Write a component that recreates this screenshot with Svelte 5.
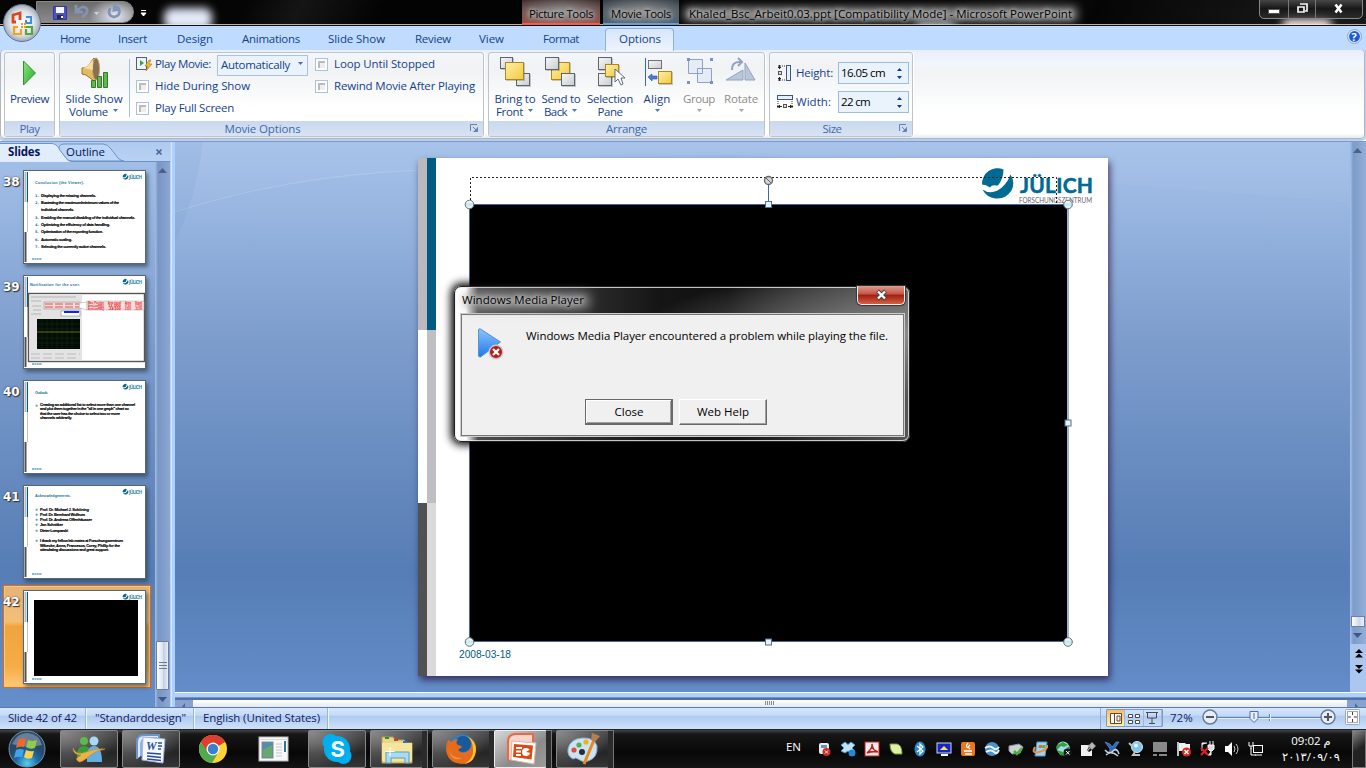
<script>
  function fit(node, width) {
    const run = () => {
      node.style.letterSpacing = '0px';
      const natural = node.getBoundingClientRect().width;
      const count = [...node.textContent.trim()].length;
      node.style.letterSpacing = (width - natural) / count + 'px';
    };
    run();
    document.fonts?.ready.then(run);
  }

  const menu = [
    ['Home', 60, 30], ['Insert', 118, 29], ['Design', 177, 36], ['Animations', 242, 58],
    ['Slide Show', 328, 57], ['Review', 415, 36], ['View', 479, 25], ['Format', 543, 36], ['Options', 619, 42]
  ];
  const slides = [38, 39, 40, 41, 42];
  const s38 = [
    ['1.', 'Displaying the missing channels.', 26, 55], ['2.', 'Illustrating the maximum/minimum values of the', 33, 78],
    ['', 'individual channels.', 40, 33], ['3.', 'Enabling the manual disabling of the individual channels.', 48, 94],
    ['4.', 'Optimizing the efficiency of data handling.', 55, 69], ['5.', 'Optimisation of the exporting function.', 62, 62],
    ['6.', 'Automatic scaling.', 70, 31], ['7.', 'Selecting the currently active channels.', 77, 65]
  ];
  const s40 = [
    ['Creating an additional list to select more than one channel', 25, 95], ['and plot them together in the "all in one graph" chart so', 29.3, 89],
    ['that the user has the choice to select two or more', 33.6, 80], ['channels arbitrarily.', 38, 32]
  ];
  const s41 = [
    ['Prof. Dr. Michael J. Schöning', 25, 49, 1], ['Prof. Dr. Bernhard Wolfrum', 30, 45, 1], ['Prof. Dr. Andreas Offenhäusser', 35, 52, 1],
    ['Jan Schnitker', 40, 23, 1], ['Dieter Lomparski', 46, 28, 1], ['I thank my fellow lab mates at Forschungszentrum', 56, 83, 1],
    ['Wibecke, Anna, Francesca, Corey, Phillip for the', 61, 80, 0], ['stimulating discussions and great support.', 65.3, 69, 0]
  ];
  const handles = [[51.5, 46.5, 1], [650, 46.5, 1], [51.5, 484, 1], [650, 484, 1], [350.5, 46.5, 0], [650, 265, 0], [350.5, 484, 0]];
  const tasks = [
    ['msn', 60, 58, 0], ['word', 122, 58, 0], ['chrome', 184, 58, 2], ['window', 245, 58, 2], ['skype', 308, 58, 0],
    ['folder', 370, 53, 1], ['firefox', 432, 58, 1], ['ppt', 494, 53, 3], ['paint', 556, 53, 1]
  ];
  const tray = ['card', 'dropbox', 'acrobat', 'leaf', 'bt', 'screen', 'java', 'bird', 'sync', 'win', 'globe', 'pin', 'idm', 'xray', 'net', 'flag', 'plug', 'vol', 'lan'];
</script>

{#snippet caret(c)}<svg class="caret" width="7" height="4"><path d="M1 0h5L3.500 3z" fill={c} /></svg>{/snippet}

{#snippet square(x, y, w, kind)}
  <rect x={x + 1} y={y + 1} width={w} height={w - 1} fill="#0003" />
  <rect x={x + 0.5} y={y + 0.5} width={w - 1} height={w - 2} fill={kind ? 'url(#gold)' : 'url(#steel)'} stroke={kind ? '#a98722' : '#5b6470'} />
{/snippet}

{#snippet globeMark(x, y, r)}
  <g transform={`translate(${x} ${y}) scale(${r / 15})`}>
    <path d="M6-14A15.500 15.500 0 0 0-15.500 1q4 0 8 3 2-3 6-2l2 0Q6-5 6-14Z" fill="#006a92" />
    <path d="M13-9q5 8 1 16-6 9-16 8-9-1-13-9 7 5 15 1Q9 2 13-9Z" fill="#006a92" />
  </g>
{/snippet}

{#snippet launcher()}<svg class="launch" width="9" height="9"><path d="M.5 7V.5H7M3.500 7.500h4v-4M3 3l4 4" fill="none" stroke="#6583ad" /><path d="M4 7h4V3z" fill="#6583ad" /></svg>{/snippet}

{#snippet thumb(n)}
  <svg class="thumb" width="123" height="94" viewBox="0 0 123 94">
    <rect x=".5" y=".5" width="122" height="93" fill="#fff" stroke="#5b6674" />
    <path d="M2.500 2v30" stroke="#b9b9be" stroke-width="2" /><path d="M4.500 2v30" stroke="#00607f" stroke-width="1" />
    <path d="M4.500 32v30" stroke="#c2c2c6" /><path d="M2.500 62v30" stroke="#515151" stroke-width="2" />
    {@render globeMark(102.500, 6.700, 2.800)}
    <text x="106" y="8.600" font-size="5" font-weight="700" fill="#2b89a8" textLength="13">JÜLICH</text>
    <path d="M9 89h10" stroke="#17749a" stroke-dasharray="2 .4" />
    {#if n === 38}
      <text class="th" x="12" y="14" textLength="49">Conclusion (the Viewer).</text>
      {#each s38 as [k, t, y, w]}
        {#if k}<text class="tn" x="12" {y} dy="1">{k}</text>{/if}
        <text class="tt" x="18" y={y + 1} textLength={w}>{t}</text>
      {/each}
    {:else if n === 39}
      <text class="th" x="7" y="11" textLength="50">Notification for the user.</text>
      <rect x="5.500" y="18.500" width="116" height="68" fill="#fff" stroke="#555" stroke-width="1.400" />
      <rect x="7" y="19" width="52" height="66" fill="#e3e3e3" />
      <path d="M8 22h45M8 26h10M9 31h9M10 35h8M8 39h10" stroke="#aaa" stroke-width=".8" />
      <rect x="14" y="44" width="43" height="30" fill="#040c06" />
      <path d="M19 44v30M24 44v30M29 44v30M34 44v30M39 44v30M44 44v30M49 44v30M14 49h43M14 54h43M14 63h43M14 68h43" stroke="#123a18" stroke-width=".4" />
      <path d="M14 57h43" stroke="#808500" stroke-width=".8" />
      <rect x="38" y="36" width="19" height="5" fill="#fff" stroke="#555" stroke-width=".4" /><rect x="41" y="36" width="15" height="2" fill="#1225e8" />
      <rect x="21" y="27" width="36" height="7" fill="#f1dada" stroke="#888" stroke-width=".5" />
      <path d="M22 29h34M22 32h34" stroke="#dd5555" stroke-dasharray="8 2" />
      <path d="M57 28l7-1v8l-7-2" fill="#fff" stroke="#888" stroke-width=".4" />
      <rect x="64" y="26" width="57" height="9" fill="#f8dede" stroke="#aaa" stroke-width=".5" />
      {#each [['Max. Positive', 'Area signal', 'Area', 'Signal'], ['Area LowFREQ', '12.500', '07.500', '17.500'], ['Area LowFREQ', '-24.500', '2.500', '-22.500']] as line, i}
        <text class="red" x="65" y={28.7 + i * 2.9} textLength="16" lengthAdjust="spacingAndGlyphs">{line[0]}</text>
        <text class="red" x="85" y={28.7 + i * 2.9} textLength="13" lengthAdjust="spacingAndGlyphs">{line[1]}</text>
        <text class="red" x="102" y={28.7 + i * 2.9} textLength="6" lengthAdjust="spacingAndGlyphs">{line[2]}</text>
        <text class="red" x="112" y={28.7 + i * 2.9} textLength="7" lengthAdjust="spacingAndGlyphs">{line[3]}</text>
      {/each}
      <path d="M8 79h49M8 83h48" stroke="#aaa" stroke-width=".7" stroke-dasharray="9 3" />
    {:else if n === 40}
      <text class="th" x="12" y="14" textLength="13">Outlook.</text>
      <text class="tn" x="12" y="27">❖</text>
      {#each s40 as [t, y, w]}<text class="tt" x="17" y={y + 1} textLength={w}>{t}</text>{/each}
    {:else if n === 41}
      <text class="th" x="12" y="12" textLength="36">Acknowledgements.</text>
      {#each s41 as [t, y, w, b]}
        {#if b}<text class="tn" x="12" y={y + 1}>❖</text>{/if}
        <text class="tt" x="17" y={y + 1} textLength={w}>{t}</text>
      {/each}
    {:else}
      <rect x="11" y="10" width="104" height="76" fill="#000" />
    {/if}
  </svg>
{/snippet}

{#snippet app(k)}
  <svg width="36" height="34" viewBox="0 0 36 34">
    {#if k === 'msn'}
      <circle cx="13" cy="9" r="4" fill="#5fb94a" /><path d="M6 27q-1-13 7-13t7 13z" fill="#3d9a35" />
      <circle cx="23" cy="9" r="4.500" fill="#a9d8f5" /><path d="M16 30q-1-16 7-16t8 16z" fill="#66aee2" />
      <path d="M2 16q3 8 13 4t19-3q-9 1-17 8t-10 4q-4-2 3-6-8 0-8-7z" fill="#eab34c" stroke="#c58a2a" stroke-width=".6" />
    {:else if k === 'word'}
      <path d="M4 27V10q0-7 7-7h15v5" fill="#dce9fb" stroke="#6b93cf" stroke-width="2" /><path d="M8 24V12q1-6 7-6h9" fill="none" stroke="#8fb1e2" stroke-width="2" />
      <path d="M10 5l22 2-2 24-21-3z" fill="#f4f8ff" stroke="#9db3d8" /><text x="13" y="18" font-size="12" font-weight="700" font-style="italic" font-family="Liberation Serif, serif" fill="#2d4f9c">W</text>
      <path d="M14 21l14 1M14 24l14 1.500M14 27l14 1.500M25 11h4M25 14h4M25 17h3" stroke="#2a4b96" stroke-width="1.700" />
    {:else if k === 'chrome'}
      <circle cx="18" cy="17" r="14" fill="#fdd335" /><path d="M18 17L5.900 10A14 14 0 0 1 30.100 10z" fill="#e0392c" /><path d="M18 10h12.200A14 14 0 0 0 5.900 10l6 10z" fill="#df3e2f" />
      <path d="M5.900 10A14 14 0 0 0 17 31l6-10-5 2-6-4z" fill="#4fab4b" /><circle cx="18" cy="17" r="6.500" fill="#fff" /><circle cx="18" cy="17" r="5.200" fill="#3a80cc" />
    {:else if k === 'window'}
      <rect x="3" y="5" width="29" height="24" fill="#f8f8f8" stroke="#b6b9bc" /><path d="M3 7.500h29" stroke="#d7dadd" /><rect x="6" y="10" width="11" height="16" fill="#508fae" stroke="#888" /><path d="M7 18l9-5v12H7z" fill="#69a86d" />
      <path d="M20 12h6M20 15h6M20 18h6M20 21h6M20 24h6" stroke="#c5c5c5" /><rect x="28" y="9" width="2" height="11" fill="#397496" />
    {:else if k === 'skype'}
      <circle cx="18" cy="17" r="13" fill="#00aff0" /><circle cx="11.500" cy="10" r="8" fill="#00aff0" /><circle cx="24.500" cy="24" r="8" fill="#00aff0" /><text x="11.500" y="25" font-size="22" font-weight="700" fill="#fff" font-family="Inter, sans-serif">S</text>
    {:else if k === 'folder'}
      <path d="M3 5h11l2 3h9l2 3h6v20H3z" fill="#ead58d" stroke="#b89b4d" /><path d="M3 11h30v18H3z" fill="#f5e59d" /><path d="M6 5h4v2H6z" fill="#1c9b2c" /><path d="M15 7h4v2h-4z" fill="#d43b24" /><path d="M24 9h4v2h-4z" fill="#1b7ac9" />
      <path d="M7 31V20h23v11h-4v-5H12v5z" fill="#a9dcf4" stroke="#5a9dc5" /><path d="M11 15v9M6.500 19.500h9" stroke="#fff" />
    {:else if k === 'firefox'}
      <circle cx="19" cy="16" r="13.500" fill="#2f7fc9" /><circle cx="20" cy="12" r="8" fill="#185a9c" /><path d="M5 8q2 0 3 2 3-3 7-3-3 4 0 6 4 1 4 2l-4 3q4 5 10 1 7-5 1-14 8 5 7 13-1 14-14 14Q4 31 3 17q0-5 2-9z" fill="#e66b1d" />
      <path d="M24 4q9 5 9 14-1 12-12 14 10-5 9-15 0-8-6-13z" fill="#fcc430" /><path d="M5 17q4 10 14 9-9 5-14-9z" fill="#f9982f" />
    {:else if k === 'ppt'}
      <path d="M5 29V10q0-8 8-8h17v8" fill="#f8d5ca" stroke="#ea6a42" stroke-width="2" /><path d="M9 9l24 2-2 21-23-4z" fill="#fff" stroke="#ddb3a7" /><path d="M11 12l19 1.500-1.500 14L10 25z" fill="#db4a12" />
      <circle cx="23" cy="20" r="4" fill="#fff" /><path d="M23 20l5-3v4z" fill="#db4a12" /><path d="M13 16h6M13 19.500h5M13 23h5" stroke="#fff" stroke-width="2" />
    {:else}
      <path d="M17 6q12-1 15 8 1 12-9 15-5 2-10-2-2-2-5 0-6-3-5-10Q5 7 17 6z" fill="#cbe3f2" stroke="#88adc8" /><circle cx="17" cy="20" r="3" fill="#222e38" />
      <circle cx="9" cy="18" r="2.600" fill="#e04c37" /><circle cx="14" cy="13" r="2.600" fill="#55ad50" /><circle cx="21" cy="10" r="2.600" fill="#f2b11b" /><path d="M19 32l10-24" stroke="#e68b20" stroke-width="3" /><path d="M26 8l1-7 8 3-5 6z" fill="#b28052" />
    {/if}
  </svg>
{/snippet}

{#snippet trayIcon(k)}
  <svg width="16" height="16" viewBox="0 0 16 16">
    {#if k === 'card'}<rect x="3" y="2" width="10" height="11" rx="2" fill="#e8edf2" /><path d="M5 4h6v3H5z" fill="#6f8faa" /><circle cx="10.500" cy="11" r="4" fill="#d02824" /><path d="M9 9.500l3 3m0-3l-3 3" stroke="#fff" />
    {:else if k === 'dropbox'}<path d="M1 4l4-3 3 2.500L11 1l4 3-3 3 3 3-4 2-3-2-3 2-4-2 3-3z" fill="#bfe2f8" stroke="#4299d5" /><circle cx="12" cy="12" r="3.500" fill="#2389d2" />
    {:else if k === 'acrobat'}<rect x="1" y="1" width="14" height="14" fill="#f4eded" stroke="#c51e20" /><path d="M3 12Q9 7 8 3q0 6 6 8-5-1-11 1z" fill="none" stroke="#c51e20" stroke-width="1.600" />
    {:else if k === 'leaf'}<path d="M2 3h7q5 1 5 10H7Q2 11 2 3z" fill="#dff0a9" stroke="#78a32b" />
    {:else if k === 'bt'}<ellipse cx="8" cy="8" rx="5.500" ry="7.500" fill="#2587d4" /><path d="M5 5l6 5-3 3V3l3 3-6 5" fill="none" stroke="#fff" stroke-width="1.200" />
    {:else if k === 'screen'}<rect x="1" y="2" width="14" height="10" fill="#1525c8" stroke="#cfd6ef" /><path d="M4 9l4-4 4 4" fill="#ffe34d" /><path d="M5 14h7" stroke="#fff" stroke-width="2" />
    {:else if k === 'java'}<rect x="1" y="1" width="14" height="14" rx="2" fill="#e87820" /><path d="M8 2q-3 3 0 5M10 4q-3 2 0 4M4 10h8M5 13h7" stroke="#fff" fill="none" stroke-width="1.300" />
    {:else if k === 'bird'}<circle cx="8" cy="8" r="7" fill="#4c91c9" /><path d="M1 7q5-3 8 0t6-1M2 11q5-3 8 0t5-2" stroke="#e8f6ff" fill="none" stroke-width="2" />
    {:else if k === 'sync'}<path d="M1 5l10-2 4 3-3 6-8 1-3-3z" fill="#cad0d4" stroke="#8a9298" /><path d="M6 10l3 3 5-6" stroke="#41b332" stroke-width="2.500" fill="none" />
    {:else if k === 'globe'}<circle cx="7" cy="7" r="6.500" fill="#a5dbe8" /><path d="M1 4l6-3 5 3-4 2-3-1-4 4zM1 9l3 5 5 1-2-4-3-1zM10 7l4-2v4z" fill="#31a437" /><circle cx="11.500" cy="11.500" r="4" fill="#16191a" /><path d="M10 10l3.500 3.500m0-3.500L10 13.500" stroke="#fff" />
    {:else if k === 'win'}<path d="M5 1h10l-2 14H3z" fill="#9bd4f7" stroke="#4d9ac9" /><path d="M7 4h3v3H6.500z" fill="#df6a29" /><path d="M10.500 4h3L13 7h-3z" fill="#68aa3b" /><path d="M3 6q-4 7 4 5t9-7" fill="none" stroke="#e7943a" stroke-width="2" />
    {:else if k === 'pin'}<path d="M1 4h9l-3 5 2 2 3-2v6H1z" fill="#f1f1f1" /><path d="M7 10l3-3M8 4l4 4M9 5l3-3 3 3-3 3z" stroke="#aaa" fill="#bbb" stroke-width="1.300" />
    {:else if k === 'idm'}<path d="M1 1l5 2 2 3 4-5h3l-4 6 2 3-4-1-4 3 1-4z" fill="#2867be" stroke="#8ab4e6" stroke-width=".5" /><path d="M1 9q4 5 8 1t6 3M2 14q5-5 12 1" stroke="#c6d5e2" fill="none" stroke-width="1.500" />
    {:else if k === 'xray'}<circle cx="9" cy="6" r="5.500" fill="#7fc5ef" stroke="#d9e7ed" /><circle cx="8" cy="4.500" r="2" fill="#e8f8ff" /><path d="M1 2l3 3M7 11l-2 3h7" stroke="#bac3ca" stroke-width="2" fill="none" />
    {:else if k === 'net'}<rect x="1" y="1" width="14" height="10" fill="#8a8a8a" /><path d="M1 13h4v2H1zM7 13h8v2H7z" fill="#888" />
    {:else if k === 'flag'}<path d="M2 1v14" stroke="#fff" stroke-width="1.500" /><path d="M3 2h6l1 1h4v7H3z" fill="#f0f0f0" /><circle cx="10.500" cy="11" r="4.500" fill="#d52b23" /><path d="M8.500 9l4 4m0-4l-4 4" stroke="#fff" stroke-width="1.400" />
    {:else if k === 'plug'}<path d="M8 4h6v4l-2 2h-2L8 8zM10 0v4M13 0v4M11 10v4H8M2 4V2h5M2 4v6" fill="#ddd" stroke="#fff" /><path d="M1 7l7 7M8 7l-7 7" stroke="#e02020" stroke-width="2.200" />
    {:else if k === 'vol'}<path d="M1 5h3l4-4v14l-4-4H1z" fill="#fff" /><path d="M10 5q2 3 0 6M12 3q4 5 0 10" stroke="#ccc" fill="none" />
    {:else}<rect x="5.500" y="4.500" width="9" height="7" fill="#111" stroke="#fff" /><path d="M7 14h7M3 7v7h5M1 1v4h4V1M3 5v3" fill="none" stroke="#fff" />
    {/if}
  </svg>
{/snippet}

<svg class="defs" width="0" height="0"><defs>
  <linearGradient id="gold" x1="0" y1="0" x2="1" y2="1"><stop offset="0" stop-color="#fff0a4" /><stop offset="1" stop-color="#f2c940" /></linearGradient>
  <linearGradient id="steel" x1="0" y1="0" x2="1" y2="1"><stop offset="0" stop-color="#f7f7f7" /><stop offset="1" stop-color="#c9cdd1" /></linearGradient>
  <linearGradient id="blueTri" x1="0" y1="0" x2="0" y2="1"><stop offset="0" stop-color="#8cc4fb" /><stop offset="1" stop-color="#1f78ec" /></linearGradient>
  <linearGradient id="green" x1="0" y1="0" x2="1" y2="1"><stop offset="0" stop-color="#8be87a" /><stop offset="1" stop-color="#1faa2d" /></linearGradient>
  <radialGradient id="orb" cx=".5" cy=".9"><stop offset="0" stop-color="#54d0f4" /><stop offset=".6" stop-color="#1c6da8" /><stop offset="1" stop-color="#27496a" /></radialGradient>
  <radialGradient id="pearl"><stop offset="0" stop-color="#fff" /><stop offset=".65" stop-color="#dfe3e9" /><stop offset="1" stop-color="#9da9b8" /></radialGradient>
  <linearGradient id="hnd" x1="0" y1="0" x2="0" y2="1"><stop offset="0" stop-color="#fff" /><stop offset=".5" stop-color="#c8e6ea" /><stop offset="1" stop-color="#eafafa" /></linearGradient>
</defs></svg>

<div class="screen">
  <header class="title">
    <div class="blob b1"></div><div class="blob b3"></div><div class="blob b4"></div>
    <div class="quick">
      <svg width="100" height="22" viewBox="0 0 100 22">
        <path d="M6.500 5.500h13v13h-13z" fill="#4e52c0" stroke="#34389c" /><path d="M9 6h8v6H9z" fill="#f3f5ff" /><path d="M10 14h6v4h-6z" fill="#222a55" /><path d="M14 15h2v2h-2z" fill="#fff" />
        <path d="M29 4v7h7M30 10q6-7 10-2 1 5-5 8" fill="none" stroke="#8492b6" stroke-width="2.800" /><path d="M47 11h5l-2.500 3z" fill="#d0d3dc" />
        <path d="M63 7q-3 8 4 9 7-1 5-8-1-2-4-3M68 3l-1 6 6-1" fill="none" stroke="#8494b8" stroke-width="2.800" />
      </svg>
    </div>
    <svg class="more" width="7" height="7"><path d="M1 .5h5M1 3h5L3.500 6z" stroke="#fff" fill="#fff" /></svg>
    <div class="context pic"><span use:fit={64}>Picture Tools</span></div>
    <div class="context mov"><span use:fit={60}>Movie Tools</span></div>
    <div class="doc"><span use:fit={383}>Khaled_Bsc_Arbeit0.03.ppt [Compatibility Mode] - Microsoft PowerPoint</span></div>
    <div class="winbtns">
      <i><svg width="12" height="12"><rect x=".5" y="6.500" width="11" height="4" fill="#fff" stroke="#555" /></svg></i>
      <i><svg width="13" height="12"><path d="M4 1h7v7H9M2 4h6v5H2z" fill="none" stroke="#f4f4f4" stroke-width="1.700" /></svg></i>
      <i class="x"><svg width="12" height="12"><path d="M2.500 1.500l6 8M8.500 1.500l-6 8" stroke="#fff" stroke-width="2.600" /></svg></i>
    </div>
  </header>

  <nav class="tabs">
    {#each menu as [t, x, w], i}
      <div class="tab" class:on={t === 'Options'} style:margin-left={(i ? x - menu[i - 1][1] - menu[i - 1][2] : x) - (t === 'Options' ? 14 : 0) + 'px'}><span use:fit={w}>{t}</span></div>
    {/each}
    <svg class="help" width="15" height="15"><circle cx="7.500" cy="7.500" r="7" fill="#d9e8fa" stroke="#8ca6c8" /><circle cx="7.500" cy="7.500" r="5.400" fill="#1c5bd0" /><text x="4.600" y="11.500" font-size="11" font-weight="700" fill="#fff">?</text></svg>
  </nav>

  <div class="office">
    <svg width="42" height="42" viewBox="0 0 42 42"><circle cx="21" cy="21" r="18.500" fill="url(#pearl)" stroke="#667487" />
      <g fill="none" stroke-width="2.800"><path d="M19 18v-7l-7 2v7h3" stroke="#d9471c" /><path d="M25 15h5v6h-5v-3" stroke="#3c90d8" stroke-width="2" /><path d="M17 25h-4v7h7v-5" stroke="#f0a51d" stroke-width="2.200" /><path d="M25 27v5h6v-7h-6" stroke="#54a73b" stroke-width="2.200" /></g>
      <path d="M20 21h2v2h-2zM23 21h2v2h-2zM20 24h2v2h-2zM23 24h2v2h-2z" fill="#e89a25" /></svg>
  </div>

  <section class="ribbon">
    <div class="group g1">
      <div class="body col">
        <svg width="30" height="36"><path d="M8.500 8v24l12-12z" fill="url(#green)" stroke="#37903a" /></svg>
        <span class="lb" use:fit={39}>Preview</span>
      </div>
      <div class="cap"><span use:fit={20}>Play</span></div>
    </div>
    <div class="group g2">
      <div class="body">
        <div class="big" style:width="66px">
          <svg width="34" height="36"><path d="M5 15l5-1 7-9q7 5 3 21l-3 2-8-6-4-1z" fill="#e4ba62" stroke="#9a7228" /><ellipse cx="19" cy="16" rx="3.500" ry="11" fill="#847155" stroke="#c5a35e" /><path d="M6 15l10-8v10z" fill="#ffeebb" opacity=".7" />
            <g fill="#60b74b" stroke="#317d2a"><path d="M14.500 27.500h4v7h-4zM20.500 23.500h4v11h-4zM26.500 19.500h4v15h-4z" /></g></svg>
          <span class="lb" use:fit={57}>Slide Show</span><span class="lb"><span use:fit={39}>Volume</span>{@render caret('#4a78b8')}</span>
        </div>
        <div class="sep"></div>
        <div class="opts">
          <div class="row r1"><svg width="17" height="16"><rect x=".5" y="1.500" width="10" height="12" fill="#eef3f8" stroke="#55606f" /><path d="M4 4v6l4-3z" fill="#3ba43e" /><path d="M13 4l-4 6h3l-2 5 6-7h-3l2-4z" fill="#f2bd36" stroke="#a77920" stroke-width=".6" /></svg>
            <span class="pm" use:fit={56}>Play Movie:</span><div class="combo"><span use:fit={69}>Automatically</span>{@render caret('#4a6ea5')}</div></div>
          <div class="row"><i class="chk"></i><span use:fit={95}>Hide During Show</span></div>
          <div class="row"><i class="chk"></i><span use:fit={79}>Play Full Screen</span></div>
        </div>
        <div class="opts o2">
          <div class="row"><i class="chk"></i><span use:fit={101}>Loop Until Stopped</span></div>
          <div class="row"><i class="chk"></i><span use:fit={141}>Rewind Movie After Playing</span></div>
        </div>
      </div>
      <div class="cap mo"><span use:fit={76}>Movie Options</span>{@render launcher()}</div>
    </div>
    <div class="group g3">
      <div class="body">
        <div class="big" style:width="46px"><svg width="34" height="36">{@render square(2, 4, 13, 0)}{@render square(18, 20, 14, 0)}{@render square(7, 9, 19, 1)}</svg>
          <span class="lb" use:fit={41}>Bring to</span><span class="lb"><span use:fit={27}>Front</span>{@render caret('#4a78b8')}</span></div>
        <div class="big" style:width="46px"><svg width="34" height="36">{@render square(7, 9, 19, 1)}{@render square(1, 4, 14, 0)}{@render square(17, 20, 14, 0)}</svg>
          <span class="lb" use:fit={39}>Send to</span><span class="lb"><span use:fit={23}>Back</span>{@render caret('#4a78b8')}</span></div>
        <div class="big" style:width="52px"><svg width="34" height="36">{@render square(5, 4, 14, 0)}{@render square(5, 20, 14, 0)}{@render square(12, 11, 14, 1)}<path d="M22 16v13l3-3 3 6 2-1-2-6h4z" fill="#fff" stroke="#5e6c82" /></svg>
          <span class="lb" use:fit={46}>Selection</span><span class="lb" use:fit={25}>Pane</span></div>
        <div class="big" style:width="42px"><svg width="34" height="36"><path d="M5.500 5v28" stroke="#3267bd" /><rect x="8.500" y="7.500" width="13" height="8" fill="url(#steel)" stroke="#6c737d" />{@render square(18, 18, 14, 1)}<path d="M8 24l4-3v2h5v3h-5v2z" fill="#4a7bd0" stroke="#2456a7" stroke-width=".6" /></svg>
          <span class="lb" use:fit={27}>Align</span><span class="lb dn">{@render caret('#4a78b8')}</span></div>
        <div class="big off" style:width="42px"><svg width="34" height="36"><path d="M6.500 6.500h14v14h-14zM15.500 15.500h14v14h-14z" fill="#e5ecf6" stroke="#8fa1c1" /><path d="M5 5h3v3H5zM28 5h3v3h-3zM5 28h3v3H5zM28 28h3v3h-3z" fill="#7d92b9" /></svg>
          <span class="lb" use:fit={32}>Group</span><span class="lb dn">{@render caret('#a5a5a5')}</span></div>
        <div class="big off" style:width="42px"><svg width="34" height="36"><path d="M2 27h17V17zM21 10v17h10z" fill="#bac7da" stroke="#92a3be" /><path d="M8 17q0-9 9-8m-3-4l4 4-4 4" fill="none" stroke="#8fa3c3" stroke-width="2" /></svg>
          <span class="lb" use:fit={34}>Rotate</span><span class="lb dn">{@render caret('#a5a5a5')}</span></div>
      </div>
      <div class="cap"><span use:fit={41}>Arrange</span></div>
    </div>
    <div class="group g4">
      <div class="body sizes">
        <div class="srow"><svg width="16" height="16"><path d="M1 1h10M1 15h10" stroke="#333" stroke-dasharray="1 1" /><path d="M2.500 0v4M2.500 12v4M1 2.500h3M1 13.500h3" stroke="#222" /><rect x="1.500" y="6.500" width="3" height="3" fill="#ddd" stroke="#555" /><rect x="9.500" y=".5" width="4" height="15" fill="#e5efff" stroke="#3f5579" /></svg><label use:fit={37}>Height:</label><div class="num"><span use:fit={44}>16.05 cm</span><svg width="7" height="13"><path d="M1 4h5L3.500 1zM1 9h5l-2.500 3z" fill="#103a8c" /></svg></div></div>
        <div class="srow"><svg width="16" height="16"><rect x=".5" y="1.500" width="15" height="4" fill="#e5efff" stroke="#3f5579" /><path d="M1 7v8M15 7v8" stroke="#333" stroke-dasharray="1 1" /><path d="M0 12.500h5M11 12.500h5M2.500 11v3M13.500 11v3" stroke="#222" /><rect x="6.500" y="10.500" width="3" height="3" fill="#ddd" stroke="#555" /></svg><label use:fit={35}>Width:</label><div class="num"><span use:fit={29}>22 cm</span><svg width="7" height="13"><path d="M1 4h5L3.500 1zM1 9h5l-2.500 3z" fill="#103a8c" /></svg></div></div>
      </div>
      <div class="cap sz"><span use:fit={19}>Size</span>{@render launcher()}</div>
    </div>
  </section>

  <main>
    <aside>
      <div class="ptabs">
        <svg width="170" height="20"><path d="M0 20V1.500h52q4 0 7 5l7 10q3 3 6 3H170" fill="none" stroke="#6d93c5" /><path d="M0 20V2h51q5 0 8 5l8 11q2 2 4 2z" fill="#e1edfc" /><path d="M59 7q0-5 5-5h39q5 0 8 5l7 9q3 3 6 3H72q-4 0-6-3z" fill="#bdd5f6" stroke="#6d93c5" /><path d="M156.500 7.500l5 5M161.500 7.500l-5 5" stroke="#48699b" stroke-width="1.700" /></svg>
        <b use:fit={32}>Slides</b><span use:fit={39}>Outline</span>
      </div>
      <div class="panel">
        <div class="list">
          {#each slides as n}
            <div class="item" class:sel={n === 42}><b use:fit={15}>{n}</b>{@render thumb(n)}</div>
          {/each}
        </div>
        <div class="sbar"><svg width="10" height="6"><path d="M0 5h9L4.500 0z" fill="#4b6186" /></svg><i></i><div class="grip"></div><svg width="10" height="6"><path d="M0 0h9L4.500 5z" fill="#3d5886" /></svg></div>
      </div>
    </aside>
    <div class="split"></div>
    <div class="stage">
      <div class="upper">
        <div class="canvas">
          <svg class="swoosh" width="1174" height="551"><path d="M0 70Q120 20 560 12L1174 60V0H0z" fill="#fff" opacity=".04" /><path d="M0 70Q110 34 245 28" fill="none" stroke="#fff" opacity=".17" /><path d="M0 0h28Q20 60 0 100z" fill="#4575b8" opacity=".07" /></svg>
          <svg class="slide" width="690" height="518" viewBox="0 0 690 518">
            <rect width="690" height="518" fill="#fff" />
            <path d="M0 0h9v172H0z" fill="#b9b9be" /><path d="M9 0h9v172H9z" fill="#005b82" /><path d="M9 172h9v173H9z" fill="#bebec3" /><path d="M0 345h9v173H0z" fill="#515151" /><path d="M9 345h9v173H9z" fill="#dadada" />
            {@render globeMark(579.500, 25.500, 15)}
            <text x="602" y="34.500" font-family="Lato, sans-serif" font-weight="700" font-size="21" stroke="#006a92" stroke-width=".5" fill="#006a92" textLength="73">JÜLICH</text>
            <text x="601" y="45" font-family="Lato, sans-serif" font-size="7.200" fill="#666" textLength="73" lengthAdjust="spacingAndGlyphs">FORSCHUNGSZENTRUM</text>
            <path d="M52.500 46V19.500h586V46" fill="none" stroke="#222" stroke-dasharray="2 2" />
            <rect x="52" y="47" width="597" height="436" fill="#000" />
            <path d="M51.500 46.500h598.500v437h-598.500z" fill="none" stroke="#40699f" />
            <path d="M350.500 23v24" stroke="#40699f" />
            <circle cx="350.500" cy="22.500" r="4" fill="#d3d3d3" stroke="#666" stroke-width="1.300" /><path d="M348 20l5 5" stroke="#666" />
            {#each handles as [x, y, round]}
              {#if round}<circle cx={x} cy={y} r="4.300" fill="url(#hnd)" stroke="#5d6f80" />{:else}<rect x={x - 3} y={y - 3} width="6" height="6" fill="#e4f4f6" stroke="#52708f" />{/if}
            {/each}
            <text x="41" y="500" font-family="Liberation Sans, sans-serif" font-size="10" fill="#005b82" textLength="52" lengthAdjust="spacingAndGlyphs">2008-03-18</text>
          </svg>
        </div>
        <div class="vbar"><svg width="10" height="6"><path d="M0 5h9L4.500 0z" fill="#4b6186" /></svg><i></i><div class="vthumb"></div><svg width="10" height="6"><path d="M0 0h9L4.500 5z" fill="#3d5886" /></svg>
          <div class="pages"><svg width="10" height="28"><path d="M1 5h8L5 1zM1 9.500h8L5 5.500zM1 17h8l-4 4zM1 21.500h8l-4 4z" fill="#000" /></svg></div></div>
      </div>
      <div class="hsplit"></div>
      <div class="hbar"><svg width="18" height="8"><path d="M10 3v5H6z" fill="#4c6795" /></svg><i></i><svg width="19" height="8"><path d="M8 3v5h4z" fill="#4c6795" /></svg></div>
    </div>
  </main>

  <footer class="status">
    <div class="cell" style:width="86px"><span use:fit={69}>Slide 42 of 42</span></div>
    <div class="cell" style:width="108px"><span use:fit={91}>"Standarddesign"</span></div>
    <div class="cell" style:width="134px"><span use:fit={117}>English (United States)</span></div>
    <div class="grow"></div>
    <div class="views"><i class="on"><svg width="12" height="11"><path d="M.5.500h11v10H.5zM4.500 1v9M7 3h3v5H7z" fill="#fff" stroke="#604b26" /></svg></i><i><svg width="12" height="11"><path d="M.5 1.500h4v3h-4zM7.500 1.500h4v3h-4zM.5 7.500h4v3h-4zM7.500 7.500h4v3h-4z" fill="#fff" stroke="#4a4a4a" /></svg></i><i><svg width="12" height="12"><path d="M0 .5h12M1.500 1v5h9V1M6 6v5M3 11.500h6" fill="none" stroke="#4a4a4a" /></svg></i></div>
    <span class="pct" use:fit={22}>72%</span>
    <svg class="zoom" width="165" height="18"><path d="M18 9.500h110M69.500 6v7" stroke="#5f7fae" /><path d="M18 10.500h110M70.500 6v7" stroke="#e5effc" /><g fill="#e8edf3" stroke="#667b98" stroke-width="1.500"><circle cx="10" cy="9" r="7" /><circle cx="128" cy="9" r="7" /></g><path d="M6 9h8M124 9h8M128 5v8" stroke="#4a5668" stroke-width="2" /><path d="M50 3.500h8v7l-4 4-4-4z" fill="#e8f0fc" stroke="#4f70a5" /><path d="M54 5v6" stroke="#4f70a5" />
      <rect x="145.500" y="1.500" width="14" height="15" rx="1" fill="#f8fafc" stroke="#98a8bf" /><path d="M147.500 3.500h10v11h-10z" fill="none" stroke="#555" stroke-dasharray="1 1" /><path d="M152.500 4v3M152.500 11v3M148 9h3M154 9h3" stroke="#444" /></svg>
  </footer>

  <div class="taskbar">
    <div class="start"><svg width="38" height="38"><circle cx="19" cy="19" r="18" fill="url(#orb)" stroke="#7891a1" /><path d="M4 14Q10 2 20 3q11 1 14 12-16 4-30-1z" fill="#fff" opacity=".3" />
      <path d="M10 10q4-3 8-1l-2 8q-4-1-8 1z" fill="#ee672c" /><path d="M20 10q4 2 9 0l-2 8q-5 2-9-1z" fill="#95c94a" /><path d="M8 20q4-2 8 0l-2 7q-4-1-8 1z" fill="#3fa4e8" /><path d="M18 20q4 2 8 1l-2 7q-5 2-8-1z" fill="#fdd24e" /></svg></div>
    {#each tasks as [k, x, w, m], i}
      <div class="task m{m}" style:width={w + 'px'} style:margin-left={(i ? x - tasks[i - 1][1] - tasks[i - 1][2] : 14) + 'px'}>{@render app(k)}</div>
    {/each}
    <span class="en" use:fit={15}>EN</span>
    <div class="tray">{#each tray as k}{@render trayIcon(k)}{/each}</div>
    <div class="clock"><span dir="ltr" use:fit={36}>09:02 م</span><span dir="ltr" use:fit={58}>٢٠١٣/٠٩/٠٩</span></div>
    <div class="peek"></div>
  </div>

  <div class="dialog">
    <div class="dtitle"><span use:fit={122}>Windows Media Player</span></div>
    <div class="dclose"><svg width="13" height="12"><path d="M2.500 2l8 8M10.500 2l-8 8" stroke="#4b4040" stroke-width="4" /><path d="M3 2.500l7 7M10 2.500l-7 7" stroke="#fff" stroke-width="2.400" /></svg></div>
    <div class="client">
      <div class="msg"><svg width="30" height="34"><path d="M2.500 2.500q0-1 2-.5l20 13-20 15q-2 0-2-1z" fill="url(#blueTri)" stroke="#5691d2" /><circle cx="20" cy="25" r="6.800" fill="#b91919" stroke="#c9c9c9" stroke-width="1.500" /><path d="M17 22l6 6m0-6l-6 6" stroke="#fff" stroke-width="2.400" /></svg><span use:fit={362}>Windows Media Player encountered a problem while playing the file.</span></div>
      <div class="btns"><button class="def"><span use:fit={29}>Close</span></button><button><span use:fit={52}>Web Help</span></button></div>
    </div>
  </div>
</div>

<style>
  :global(body) { margin: 0; overflow: hidden; }
  * { box-sizing: border-box; }
  svg { display: block; flex: none; }
  .defs { position: absolute; }
  .screen { width: 1366px; height: 768px; position: relative; display: flex; flex-direction: column; overflow: hidden; font: 11.5px/13px "Open Sans", "Noto Sans", sans-serif; color: #15428b; white-space: nowrap; }
  .screen span, b, label { display: inline-block; flex: none; white-space: pre; }

  .title { height: 26px; flex: none; position: relative; display: flex; overflow: hidden; background: linear-gradient(115deg, #050505 0 18%, #151515 22%, #030303 28% 70%, #101010 75%, #050505 80%, #191919 96%); border-bottom: 1px solid #111; box-shadow: inset 0 -1px #b7b0a0; color: #000; }
  .blob { position: absolute; filter: blur(4px); background: #e4e9f8; border-radius: 8px; }
  .b1 { left: 164px; top: 8px; width: 48px; height: 22px; }
  .b3 { left: 1282px; top: 19px; width: 50px; height: 12px; background: #fbe9e9; }
  .b4 { left: 916px; top: 22px; width: 40px; height: 8px; }
  .quick { position: relative; width: 98px; height: 22px; margin: 1px 0 0 36px; padding-left: 10px; border: 1px solid #888; border-radius: 0 11px 11px 0; background: radial-gradient(ellipse 26px 18px at 78px 14px, #e6eaf6, #e6eaf600), linear-gradient(#6b6b6b, #8b8b8b); }
  .quick svg { margin-top: -1px; }
  .more { margin: 10px 0 0 6px; position: relative; }
  .context { height: 25px; padding-top: 7px; text-align: center; position: relative; color: #050505; }
  .context span, .doc span { text-shadow: 0 0 5px #ccc, 0 0 7px #bbb, 0 0 4px #aaa; }
  .pic { width: 78px; margin-left: 375px; background: radial-gradient(ellipse, #888 10%, #8883), linear-gradient(#281414, #a23c34); border-bottom: 2px solid #ee5f4f; }
  .mov { width: 76px; margin-left: 3px; background: radial-gradient(ellipse, #888 10%, #8883), linear-gradient(#1d2933, #34536c); border-bottom: 2px solid #66a0cb; }
  .doc { margin-left: 0; padding: 7px 10px 0; height: 24px; position: relative; }
  .doc::before { content: ''; position: absolute; inset: 7px 5px 3px; background: #8c8c8c; filter: blur(5px); }
  .doc span { position: relative; }
  .winbtns { position: absolute; right: 3px; top: -2px; height: 21px; display: flex; border: 1px solid #888; border-radius: 0 0 5px 5px; background: linear-gradient(#666a, #181818aa 50%, #333a); }
  .winbtns i { width: 29px; display: grid; place-items: center; border-right: 1px solid #777; }
  .winbtns i:nth-child(2) { width: 27px; }
  .winbtns .x { width: 46px; border: 0; }

  .tabs { height: 24px; flex: none; background: #bfdbff; display: flex; position: relative; }
  .tab { padding-top: 6px; height: 24px; flex: none; }
  .tab.on { width: 69px; margin-top: 2px; height: 23px; padding: 3px 0 0 13px; background: linear-gradient(#d7e6fa, #eef4fd); border: 1px solid #8fb0d8; border-bottom: 0; border-radius: 4px 4px 0 0; z-index: 2; }
  .help { position: absolute; right: 4px; top: 3px; }
  .office { position: absolute; left: 1px; top: 2px; }

  .ribbon { height: 90px; flex: none; display: flex; gap: 4px; padding: 2px 0 2px 3px; margin: -1px 1px 0 0; border: 1px solid #b0b7c2; border-radius: 4px; background: linear-gradient(#e7effa, #f2f6fd 15%, #f1f3f4 25%, #fff 70%, #fff 95%, #e8e8e8); outline: 2px solid #b4cff2; }
  .group { height: 85px; flex: none; border: 1px solid #bfc4cb; border-radius: 3px; display: flex; flex-direction: column; background: linear-gradient(#f3f6fb, #f0f2f3 20%, #fff 65%); box-shadow: 1px 0 #fff; }
  .g1 { width: 51px; } .g2 { width: 425px; } .g3 { width: 277px; } .g4 { width: 144px; }
  .body { height: 68px; display: flex; }
  .cap { height: 15px; background: linear-gradient(#c9d8ee, #d8e3f4); color: #3e6aaa; text-align: center; position: relative; padding-top: 1px; }
  .mo { padding-right: 18px; }
  .sz { padding-right: 18px; }
  .launch { position: absolute; right: 4px; top: 3px; }
  .lb { height: 13px; line-height: 13px; }
  .lb :global(.caret) { display: inline-block; margin: 0 0 3px 4px; }
  .dn :global(.caret) { margin-left: 0; }
  .col, .big { display: flex; flex-direction: column; align-items: center; }
  .col > svg, .big > svg { margin-bottom: 3px; }
  .off { color: #8d8d8d; }
  .g2 .big { margin-left: 1px; margin-right: -8px; }
  .sep { width: 1px; margin: 6px 0 4px 10px; background: #a6bfdf; }
  .opts { margin: 0 0 0 6px; width: 172px; }
  .row { height: 22px; display: flex; align-items: center; }
  .row > span { margin-top: -1px; }
  .chk { width: 13px; height: 13px; margin-right: 6px; border: 1px solid #abc1de; background: #eee; box-shadow: inset 0 0 0 2px #fff, inset 2px 2px 0 2px #bbb; flex: none; margin-top: 1px; }
  .pm { margin-left: 2px; }
  .combo { margin: 2px 0 0 6px; width: 95px; height: 21px; display: flex; align-items: center; justify-content: space-between; border: 1px solid #abc1de; background: #eaf2fb; padding: 0 3px 2px; }
  .o2 { margin-left: 7px; width: auto; }
  .g3 .body { padding-left: 3px; }
  .sizes { flex-direction: column; padding: 9px 0 0 7px; gap: 7px; }
  .srow { display: flex; align-items: center; height: 22px; }
  .srow label { margin: -2px 0 0 3px; }
  .num { margin-left: auto; margin-right: 3px; width: 71px; height: 22px; border: 1px solid #9ebbe0; background: #eaf3fc; color: #000; display: flex; align-items: center; justify-content: space-between; padding: 0 5px 0 2px; }
  .num span { margin-top: -2px; }

  main { flex: 1; min-height: 0; margin-top: 2px; display: flex; background: linear-gradient(#a4c1ea, #a0bde6 5%, #7c9ccc 36%, #567db5 76%, #658fcb); border-top: 1px solid #7b9cc9; }
  aside { width: 170px; flex: none; display: flex; flex-direction: column; }
  .ptabs { height: 20px; flex: none; position: relative; background: linear-gradient(#aecaef, #b9d2f4); display: flex; color: #15428b; }
  .ptabs > svg { position: absolute; inset: 0; }
  .ptabs b, .ptabs span { position: relative; margin: 3px 0 0 8px; color: #07165b; }
  .ptabs span { margin-left: 26px; }
  .panel { flex: 1; min-height: 0; display: flex; }
  .list { width: 155px; padding-top: 3px; }
  .item { height: 103px; margin: 0 4px 2px 3px; padding: 4px 0 0; display: flex; border: 1px solid transparent; }
  .item b { width: 15px; margin: 5px 5px 0 -1px; color: #fff; font: bold 12px/14px "DejaVu Sans", sans-serif; text-shadow: 1px 1px 1px #333, 0 0 2px #444; }
  .item .thumb { margin-left: auto; margin-right: 4px; }
  .item.sel { border: 1px solid #e36b14; background: linear-gradient(#e6b276, #f4c077 35%, #f1a43e 40%, #f6ac47 80%, #fdc979); box-shadow: inset 0 0 0 1px #fbc875; }
  .thumb { box-shadow: 2px 3px 4px #2349; }
  .th { font: bold 3.8px "Liberation Sans", sans-serif; fill: #17749a; white-space: pre; }
  .tn { font: bold 3.5px "DejaVu Sans", sans-serif; fill: #17749a; }
  .tt { font: bold 4px "Liberation Sans", sans-serif; fill: #000; stroke: #000; stroke-width: .15; }
  .red { font: bold 3px "Liberation Sans", sans-serif; fill: #e41818; }
  .sbar { width: 15px; background: linear-gradient(90deg, #a5bfe6, #7896c4 20%, #8ba7d3); display: flex; flex-direction: column; align-items: center; padding: 6px 0 4px; }
  .sbar i, .vbar i { flex: 1; }
  .grip { width: 13px; height: 49px; margin-bottom: 7px; border: 1px solid #687da0; background: repeating-linear-gradient(#6d7b91 0 1px, transparent 1px 3px) center / 8px 8px no-repeat, linear-gradient(90deg, #fff, #dce5f2 50%, #c2cfe4 60%, #e9eff8); border-radius: 1px; }
  .split { width: 5px; background: linear-gradient(90deg, #7ba2d7, #fff 1px, #add1ff 2px); }
  .stage { flex: 1; min-width: 0; display: flex; flex-direction: column; }
  .upper { flex: 1; min-height: 0; display: flex; }
  .canvas { flex: 1; position: relative; overflow: hidden; }
  .swoosh { position: absolute; inset: 0; }
  .slide { position: relative; margin: 16px 0 0 243px; box-shadow: 2px 4px 7px #203a; }
  .vbar { width: 16px; display: flex; flex-direction: column; align-items: center; padding-top: 6px; background: linear-gradient(90deg, #a5c2ed, #7d9bc8 20%, #93afd9); }
  .vthumb { width: 14px; height: 11px; margin-bottom: 6px; border: 1px solid #6c81a5; background: linear-gradient(90deg, #fff, #cdd9eb 60%, #eef2f8); }
  .pages { width: 16px; height: 48px; margin-top: 5px; padding: 4px 4px; background: #abc7f0; }
  .hsplit { height: 6px; flex: none; border-top: 1px solid #fff; background: #afd1fc; border-bottom: 1px solid #7194c5; }
  .hbar { height: 9px; flex: none; display: flex; background: #86a2cd; border-top: 2px solid #4f73a8; }
  .hbar i { flex: 1; background: linear-gradient(#fff, #e5e8ed); }
  .hbar i::after { content: ''; display: block; width: 9px; height: 4px; margin: 1px 572px; background: repeating-linear-gradient(90deg, #888 0 1px, transparent 1px 2px); }

  .status { height: 22px; flex: none; display: flex; background: linear-gradient(#d7e6fa, #c3daf8 35%, #accaf1 38%, #d0e1f8); border-top: 1px solid #567cb1; color: #15215b; }
  .cell { padding: 3px 0 0 8px; border-right: 1px solid #9ab6de; box-shadow: 1px 0 #eef5ff; }
  .cell + .cell { padding-left: 9px; }
  .grow { flex: 1; border-right: 1px solid #8facd6; }
  .views { width: 57px; height: 18px; margin: 1px 0 0 5px; display: flex; border: 1px solid #7e9ac4; border-radius: 1px; }
  .views i { flex: 1; display: grid; place-items: center; border-right: 1px solid #a1b8da; }
  .views .on { background: linear-gradient(#f8bb68, #fff0aa); }
  .pct { margin: 3px 0 0 7px; width: 22px; }
  .zoom { margin: 0 1px 0 8px; }

  .taskbar { height: 39px; flex: none; display: flex; background: linear-gradient(#454545, #171717 4px, #070707 60%, #151515); border-top: 1px solid #1d252d; color: #fff; }
  .start { width: 46px; padding: 0 0 0 8px; }
  .task { height: 38px; display: grid; place-items: center; border-radius: 2px; flex: none; position: relative; }
  .m0, .m1 { border: 1px solid #888; background: radial-gradient(ellipse at 0 0, #8b8b8b, transparent 75%), linear-gradient(#4a4a4a, #252525 60%, #353535); }
  .m3 { border: 1px solid #eee; background: linear-gradient(145deg, #d8d8d8, #8b8b8b 60%, #9c9c9c); }
  .m1::after, .m3::after { content: ''; position: absolute; left: 100%; top: -1px; width: 5px; height: 38px; border: 1px solid #777; border-left: 0; background: #2b2b2b; }
  .en { margin: 10px 0 0 177px; }
  .tray { display: flex; gap: 8px; margin: 11px 0 0 15px; width: 448px; flex: none; }
  .clock { width: 80px; flex: none; margin-left: 7px; padding-top: 4px; display: flex; flex-direction: column; align-items: center; gap: 3px; font-family: "Open Sans", "DejaVu Sans", sans-serif; }
  .peek { margin-left: auto; width: 14px; border: 1px solid #777; background: linear-gradient(145deg, #888, #222 50%); }

  .dialog { position: absolute; left: 454px; top: 286px; width: 456px; height: 156px; border: 1px solid #ddd; outline: 1px solid #222; outline-offset: -1px; border-radius: 7px; padding: 0 5px 5px 6px; color: #000; background: linear-gradient(90deg, #fff 11px, #8880 23px), radial-gradient(ellipse at 100% 30%, #8a8a8a, transparent 42%), linear-gradient(90deg, #555, #151515 45%, #111 60%, #555); box-shadow: 0 0 9px 3px #000, inset 0 0 0 1px #eeec; }
  .dtitle { height: 27px; padding: 6px 0 0 1px; position: relative; }
  .dtitle::before { content: ''; position: absolute; left: 6px; top: 7px; width: 122px; height: 14px; background: #999; filter: blur(6px); }
  .dtitle span { position: relative; text-shadow: 0 0 4px #ddd, 0 0 7px #ccc; }
  .dclose { position: absolute; right: 4px; top: -1px; width: 48px; height: 19px; display: grid; place-items: center; border: 1px solid #eee; border-top: 0; border-radius: 0 0 5px 5px; background: linear-gradient(#dc9b8f, #c65444 45%, #9e1f12 50%, #d45e43); box-shadow: 0 0 1px 1px #333; }
  .client { height: 122px; border: 1px solid #777; outline: 1px solid #ccc; background: #f0f0f0; }
  .msg { display: flex; height: 84px; padding: 10px 0 0 14px; }
  .msg svg { margin-top: 2px; }
  .msg span { margin: 4px 0 0 20px; }
  .btns { display: flex; gap: 6px; padding-left: 123px; }
  button { width: 88px; height: 26px; padding: 0 0 2px; font: inherit; color: #000; border: 1px solid #fff; border-right-color: #696969; border-bottom-color: #696969; background: #f0f0f0; box-shadow: inset -1px -1px #a0a0a0; }
  button.def { border: 1px solid #696969; box-shadow: inset -1px -1px #696969, inset 1px 1px #fff, inset -2px -2px #a0a0a0; }
</style>
